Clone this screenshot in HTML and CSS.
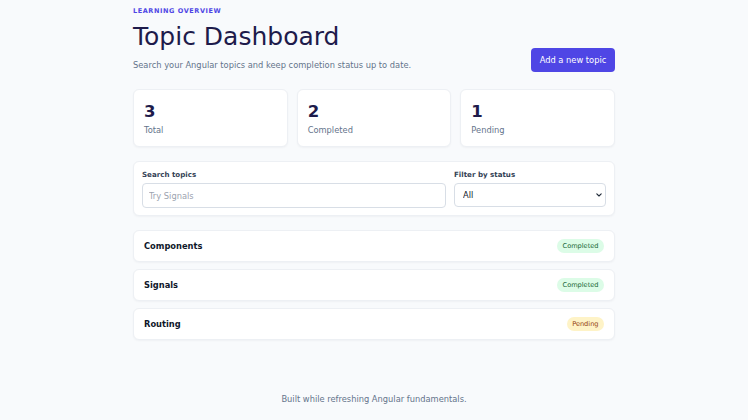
FILE: index.html
```html
<!DOCTYPE html>
<html lang="en">
<head>
<meta charset="utf-8">
<title>Topic Dashboard</title>
<link rel="stylesheet" href="styles.css">
</head>
<body>
<main class="page">
  <header class="header">
    <div class="header-text">
      <p class="eyebrow">LEARNING OVERVIEW</p>
      <h1 class="title">Topic Dashboard</h1>
      <p class="subtitle">Search your Angular topics and keep completion status up to date.</p>
    </div>
    <button class="btn-primary" type="button">Add a new topic</button>
  </header>

  <section class="stats">
    <div class="card stat">
      <div class="stat-value">3</div>
      <div class="stat-label">Total</div>
    </div>
    <div class="card stat">
      <div class="stat-value">2</div>
      <div class="stat-label">Completed</div>
    </div>
    <div class="card stat">
      <div class="stat-value">1</div>
      <div class="stat-label">Pending</div>
    </div>
  </section>

  <section class="card filters">
    <label class="field">
      <span class="field-label">Search topics</span>
      <input class="input" type="text" placeholder="Try Signals">
    </label>
    <label class="field">
      <span class="field-label">Filter by status</span>
      <span class="select-wrap">
        <select class="select">
          <option>All</option>
          <option>Completed</option>
          <option>Pending</option>
        </select>
        <svg class="select-arrow" width="6" height="4" viewBox="0 0 6 4" aria-hidden="true">
          <path d="M0.8 0.8 L3 3 L5.2 0.8" fill="none" stroke="#1f2937" stroke-width="1.1" stroke-linecap="round" stroke-linejoin="round"/>
        </svg>
      </span>
    </label>
  </section>

  <ul class="topics">
    <li class="card topic">
      <span class="topic-name">Components</span>
      <span class="badge badge-done">Completed</span>
    </li>
    <li class="card topic">
      <span class="topic-name">Signals</span>
      <span class="badge badge-done">Completed</span>
    </li>
    <li class="card topic">
      <span class="topic-name">Routing</span>
      <span class="badge badge-pending">Pending</span>
    </li>
  </ul>
</main>
<footer class="footer">Built while refreshing Angular fundamentals.</footer>
</body>
</html>
```

FILE: styles.css
```css
* { box-sizing: border-box; }

html, body {
  margin: 0;
  padding: 0;
}

body {
  background: #f8fafc;
  font-family: "DejaVu Sans", "Noto Sans", sans-serif;
  color: #0f172a;
}

.page {
  width: 482px;
  margin: 0 auto;
  padding-top: 7px;
}

.header {
  display: flex;
  justify-content: space-between;
  align-items: flex-end;
}

.eyebrow {
  margin: 0;
  font-size: 6.5px;
  line-height: 8px;
  font-weight: 700;
  letter-spacing: 0.09em;
  color: #4f46e5;
}

.title {
  margin: 7px 0 0;
  font-size: 25px;
  line-height: 30px;
  font-weight: 400;
  color: #1e1b4b;
}

.subtitle {
  margin: 7px 0 0;
  font-size: 8.3px;
  line-height: 12px;
  color: #64748b;
}

.btn-primary {
  width: 84px;
  height: 24px;
  padding: 0;
  margin-bottom: -1px;
  border: 0;
  border-radius: 4px;
  background: #4f46e5;
  color: #ffffff;
  font-family: inherit;
  font-size: 8.3px;
}

.card {
  background: #ffffff;
  border: 1px solid #edf0f4;
  border-radius: 6px;
  box-shadow: 0 1px 2px rgba(15, 23, 42, 0.04);
}

.stats {
  margin-top: 18px;
  display: grid;
  grid-template-columns: repeat(3, 1fr);
  gap: 9px;
}

.stat {
  height: 58px;
  padding: 12px 10px 0;
}

.stat-value {
  font-size: 16.5px;
  line-height: 20px;
  font-weight: 700;
  color: #1e1b4b;
}

.stat-label {
  margin-top: 2.5px;
  font-size: 8.3px;
  line-height: 11px;
  color: #64748b;
}

.filters {
  margin-top: 14px;
  height: 55px;
  padding: 7.5px 8px 0;
  display: grid;
  grid-template-columns: 2fr 1fr;
  gap: 8px;
}

.field {
  display: flex;
  flex-direction: column;
}

.field-label {
  font-size: 7.1px;
  line-height: 9px;
  font-weight: 700;
  color: #334155;
  margin-bottom: 4.5px;
}

.input,
.select {
  height: 25px;
  border: 1px solid #d8dee6;
  border-radius: 4px;
  background: #ffffff;
  font-family: inherit;
  font-size: 8.3px;
  color: #0f172a;
  padding: 0 6px;
  margin: 0;
}

.input::placeholder {
  color: #9ca3af;
}

.select-wrap {
  position: relative;
  display: block;
}

.select {
  -webkit-appearance: none;
  appearance: none;
  width: 100%;
  height: 24px;
  padding: 0 14px 0 8px;
}

.select-arrow {
  position: absolute;
  right: 4px;
  top: 10px;
  pointer-events: none;
}

.topics {
  list-style: none;
  margin: 14px 0 0;
  padding: 0;
  display: flex;
  flex-direction: column;
  gap: 7px;
}

.topic {
  height: 32px;
  padding: 0 10px;
  display: flex;
  justify-content: space-between;
  align-items: center;
}

.topic-name {
  font-size: 8.3px;
  font-weight: 700;
  color: #0f172a;
}

.badge {
  font-size: 6.6px;
  line-height: 14px;
  padding: 0 5.5px;
  border-radius: 999px;
}

.badge-done {
  background: #dcfce7;
  color: #166534;
}

.badge-pending {
  background: #fef3c7;
  color: #92400e;
}

.footer {
  margin-top: 53px;
  text-align: center;
  font-size: 8.3px;
  line-height: 12px;
  color: #64748b;
}
```
